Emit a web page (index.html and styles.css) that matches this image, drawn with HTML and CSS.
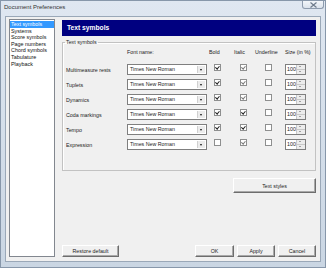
FILE: index.html
```html
<!DOCTYPE html>
<html lang="en">
<head>
    <meta charset="UTF-8">
    <title>Document Preferences</title>
    <link rel="stylesheet" href="styles.css">
</head>
<body>

<div class="window">
    <!-- Title bar -->
    <div class="titlebar">
        <span class="title">Document Preferences</span>
        <span class="close">
            <svg width="9" height="6" viewBox="0 0 9 6"><path d="M1.5 0.5 L7.5 5.5 M7.5 0.5 L1.5 5.5" stroke="#6d7a8a" stroke-width="1.1" fill="none"/></svg>
        </span>
    </div>

    <div class="client">
        <!-- Category list -->
        <ul class="nav">
            <li class="selected">Text symbols</li>
            <li>Systems</li>
            <li>Score symbols</li>
            <li>Page numbers</li>
            <li>Chord symbols</li>
            <li>Tabulature</li>
            <li>Playback</li>
        </ul>

        <div class="main">
            <div class="page-head">Text symbols</div>

            <fieldset class="group">
                <legend>Text symbols</legend>
                <div class="grid">
                    <span></span>
                    <span class="head">Font name:</span>
                    <span class="head head-bold">Bold</span>
                    <span class="head">Italic</span>
                    <span class="head">Underline</span>
                    <span class="head">Size (in %)</span>

                    <span class="label">Multimeasure rests</span>
                    <span class="combo"><span class="combo-text">Times New Roman</span><span class="drop"></span></span>
                    <span class="check c-bold on"></span>
                    <span class="check c-italic on dim"></span>
                    <span class="check c-under"></span>
                    <span class="spin"><span class="spin-text">100</span><span class="spin-btns"><i class="up"></i><i class="down"></i></span></span>

                    <span class="label">Tuplets</span>
                    <span class="combo"><span class="combo-text">Times New Roman</span><span class="drop"></span></span>
                    <span class="check c-bold on"></span>
                    <span class="check c-italic on dim"></span>
                    <span class="check c-under"></span>
                    <span class="spin"><span class="spin-text">100</span><span class="spin-btns"><i class="up"></i><i class="down"></i></span></span>

                    <span class="label">Dynamics</span>
                    <span class="combo"><span class="combo-text">Times New Roman</span><span class="drop"></span></span>
                    <span class="check c-bold on"></span>
                    <span class="check c-italic on dim"></span>
                    <span class="check c-under"></span>
                    <span class="spin"><span class="spin-text">100</span><span class="spin-btns"><i class="up"></i><i class="down"></i></span></span>

                    <span class="label">Coda markings</span>
                    <span class="combo"><span class="combo-text">Times New Roman</span><span class="drop"></span></span>
                    <span class="check c-bold on"></span>
                    <span class="check c-italic on"></span>
                    <span class="check c-under"></span>
                    <span class="spin"><span class="spin-text">100</span><span class="spin-btns"><i class="up"></i><i class="down"></i></span></span>

                    <span class="label">Tempo</span>
                    <span class="combo"><span class="combo-text">Times New Roman</span><span class="drop"></span></span>
                    <span class="check c-bold on"></span>
                    <span class="check c-italic on"></span>
                    <span class="check c-under"></span>
                    <span class="spin"><span class="spin-text">100</span><span class="spin-btns"><i class="up"></i><i class="down"></i></span></span>

                    <span class="label">Expression</span>
                    <span class="combo"><span class="combo-text">Times New Roman</span><span class="drop"></span></span>
                    <span class="check c-bold"></span>
                    <span class="check c-italic on dim"></span>
                    <span class="check c-under"></span>
                    <span class="spin"><span class="spin-text">100</span><span class="spin-btns"><i class="up"></i><i class="down"></i></span></span>
                </div>
            </fieldset>

            <div class="styles-row">
                <button class="btn btn-styles">Text styles</button>
            </div>

            <!-- Dialog buttons -->
            <div class="footer">
                <button class="btn btn-restore">Restore default</button>
                <div class="actions">
                    <button class="btn btn-ok">OK</button>
                    <button class="btn btn-apply">Apply</button>
                    <button class="btn btn-cancel">Cancel</button>
                </div>
            </div>
        </div>
    </div>
</div>

</body>
</html>
```

FILE: styles.css
```css
body {
    margin: 0;
    font-family: "Liberation Sans", Arial, sans-serif;
    font-size: 5.3px;
    color: #222;
    background: #cfdae6;
}

/* Window frame */
.window {
    width: 326px;
    height: 268px;
    box-sizing: border-box;
    display: flex;
    flex-direction: column;
    border: 1px solid #8797aa;
    background: linear-gradient(#dfe7f1, #cad6e3);
}

.titlebar {
    height: 15px;
    display: flex;
    align-items: flex-start;
    justify-content: space-between;
}

.title {
    font-size: 6px;
    color: #333;
    margin: 3px 0 0 3px;
    line-height: 7px;
}

.close {
    width: 22px;
    height: 8px;
    margin-right: 1px;
    box-sizing: border-box;
    border: 1px solid #8e9cae;
    border-top: none;
    border-radius: 0 0 3px 3px;
    background: linear-gradient(#f3f6fa, #dbe3ec);
    display: flex;
    align-items: center;
    justify-content: center;
}

.client {
    flex: 1;
    margin: 0 4px 5px 4px;
    border: 1px solid #9aa8b8;
    background: #f0f0f0;
    display: flex;
    gap: 7px;
    padding: 2px 4px 4px 3px;
}

/* Category list */
.nav {
    list-style: none;
    margin: 0;
    padding: 1px 0 0 0;
    width: 46px;
    box-sizing: border-box;
    border: 1px solid #82878f;
    background: #fff;
}

.nav li {
    line-height: 6.6px;
    height: 6.6px;
    padding-left: 1px;
    font-size: 5.4px;
    color: #111;
    white-space: nowrap;
}

.nav li.selected {
    background: #3399ff;
    color: #fff;
}

/* Right page */
.main {
    flex: 1;
    display: flex;
    flex-direction: column;
    padding-top: 1px;
}

.page-head {
    height: 16px;
    background: #000080;
    color: #fff;
    font-weight: bold;
    font-size: 6.7px;
    line-height: 16px;
    padding-left: 5px;
}

.group {
    margin: 3px 0 0 0;
    padding: 3px 3px 20px 3px;
    border: 1px solid #c2c2c2;
    box-shadow: inset 1px 1px 0 #fff;
    min-inline-size: 0;
}

.group legend {
    padding: 0 1px;
    margin-left: -1px;
    line-height: 7px;
    color: #222;
}

.grid {
    display: grid;
    grid-template-columns: 61px 80px 27px 21px 30px 26px;
    grid-template-rows: 11px;
    grid-auto-rows: 11px;
    row-gap: 4px;
}

.head {
    align-self: start;
    line-height: 7px;
    white-space: nowrap;
}

.head-bold { margin-left: 2px; }

.label {
    align-self: center;
    white-space: nowrap;
}

/* Font combobox */
.combo {
    display: flex;
    box-sizing: border-box;
    height: 11px;
    border: 1px solid #7f7f7f;
    background: #fff;
    padding: 1px;
}

.combo-text {
    flex: 1;
    line-height: 7px;
    padding-left: 1px;
    white-space: nowrap;
}

.drop {
    width: 7px;
    background: #ececec;
    border-left: 1px solid #d0d0d0;
    position: relative;
}

.drop::after {
    content: "";
    position: absolute;
    left: 2px;
    top: 3px;
    border-left: 1.5px solid transparent;
    border-right: 1.5px solid transparent;
    border-top: 2px solid #111;
}

/* Checkboxes */
.check {
    align-self: start;
    width: 7px;
    height: 7px;
    box-sizing: border-box;
    border: 1px solid #8e8f8f;
    background: #fff;
    position: relative;
}

.c-bold { margin-left: 7px; }
.c-italic { margin-left: 6px; }
.c-under { margin-left: 10px; }

.check.on::after {
    content: "";
    position: absolute;
    left: 1.2px;
    top: 0.3px;
    width: 1.5px;
    height: 2.8px;
    border: solid #222;
    border-width: 0 1px 1px 0;
    transform: rotate(40deg);
}

.check.dim::after {
    border-color: #7a7a7a;
}

/* Size spinner */
.spin {
    display: flex;
    width: 21px;
    height: 11px;
    box-sizing: border-box;
    border: 1px solid #7f7f7f;
    background: #fff;
}

.spin-text {
    flex: 1;
    line-height: 9px;
    padding-left: 1px;
}

.spin-btns {
    width: 8px;
    display: flex;
    flex-direction: column;
    background: #ececec;
    border-left: 1px solid #c8c8c8;
}

.spin-btns i {
    flex: 1;
    position: relative;
}

.spin-btns .up { border-bottom: 1px solid #c8c8c8; }

.spin-btns .up::after,
.spin-btns .down::after {
    content: "";
    position: absolute;
    left: 2px;
    border-left: 1.5px solid transparent;
    border-right: 1.5px solid transparent;
}

.spin-btns .up::after { top: 1px; border-bottom: 1.5px solid #555; }
.spin-btns .down::after { top: 1px; border-top: 1.5px solid #555; }

/* Buttons */
.btn {
    font-family: inherit;
    font-size: 5.3px;
    color: #222;
    background: #f0f0f0;
    border: 1px solid;
    border-color: #fff #6d6d6d #6d6d6d #fff;
    box-shadow: inset -1px -1px 0 #a9a9a9;
    padding: 0;
    height: 12px;
}

.styles-row {
    display: flex;
    justify-content: flex-end;
    margin-top: 7px;
}

.btn-styles {
    width: 83px;
    height: 15px;
}

.footer {
    margin-top: auto;
    display: flex;
    justify-content: space-between;
}

.actions {
    display: flex;
    gap: 3px;
}

.btn-restore { width: 57px; }
.btn-ok { width: 39px; }
.btn-apply { width: 38px; }
.btn-cancel { width: 38px; }
```
